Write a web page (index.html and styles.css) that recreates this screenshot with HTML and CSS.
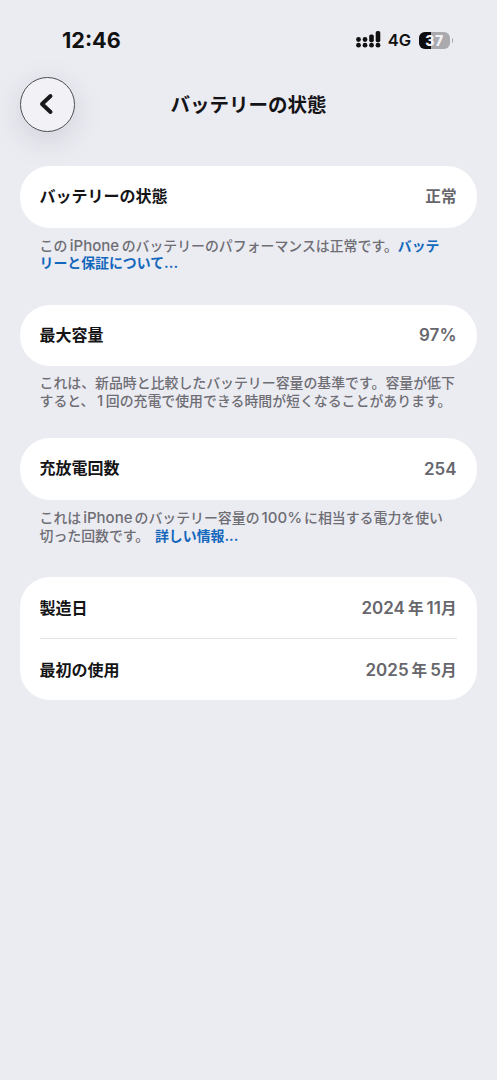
FILE: index.html
```html
<!DOCTYPE html>
<html lang="ja">
<head>
<meta charset="utf-8">
<title>バッテリーの状態</title>
<link rel="stylesheet" href="styles.css">
</head>
<body>
<div class="status">
  <span class="time">12:46</span>
  <div class="status-right">
    <svg class="signal" width="25" height="17" viewBox="0 0 25 17">
      <g fill="#111">
        <circle cx="2.5" cy="8.5" r="2.4"/><circle cx="2.5" cy="14.2" r="2.4"/>
        <circle cx="9" cy="8.5" r="2.4"/><circle cx="9" cy="14.2" r="2.4"/>
        <rect x="13.2" y="3.5" width="4.6" height="7.7" rx="1.8"/><circle cx="15.5" cy="14.2" r="2.4"/>
        <rect x="19.7" y="0" width="4.6" height="11.2" rx="1.8"/><circle cx="22" cy="14.2" r="2.4"/>
      </g>
    </svg>
    <span class="net">4G</span>
    <div class="battery"><span class="level"></span><span class="pct">37</span></div>
    <span class="nub"></span>
  </div>
</div>
<header class="nav">
  <button class="back" aria-label="戻る">
    <svg width="16" height="22" viewBox="0 0 16 22"><path d="M12.5 3 L4 11 L12.5 19" fill="none" stroke="#1a1a1c" stroke-width="4" stroke-linecap="round" stroke-linejoin="round"/></svg>
  </button>
  <h1>バッテリーの状態</h1>
</header>
<main>
  <section class="card"><div class="row"><span class="label">バッテリーの状態</span><span class="value">正常</span></div></section>
  <p class="note note-a">この<span class="lat">iPhone</span>のバッテリーのパフォーマンスは正常です。<a>バッテ<br>リーと保証について...</a></p>

  <section class="card"><div class="row"><span class="label">最大容量</span><span class="value value-solo"><span class="num">97%</span></span></div></section>
  <p class="note note-b">これは、新品時と比較したバッテリー容量の基準です。容量が低下<br>すると、<span class="lat">1</span>回の充電で使用できる時間が短くなることがあります。</p>

  <section class="card"><div class="row"><span class="label">充放電回数</span><span class="value value-solo"><span class="num">254</span></span></div></section>
  <p class="note note-c">これは<span class="lat">iPhone</span>のバッテリー容量の<span class="lat">100%</span>に相当する電力を使い<br>切った回数です。 <a>詳しい情報...</a></p>

  <section class="card">
    <div class="row row-tight"><span class="label">製造日</span><span class="value"><span class="num">2024</span><span class="cjk">年</span><span class="num">11</span>月</span></div>
    <div class="divider"></div>
    <div class="row row-tight"><span class="label">最初の使用</span><span class="value"><span class="num">2025</span><span class="cjk">年</span><span class="num">5</span>月</span></div>
  </section>
</main>
</body>
</html>
```
FILE: styles.css
```css
* { box-sizing: border-box; }
html, body { margin: 0; padding: 0; }
body {
  width: 497px;
  height: 1080px;
  overflow: hidden;
  background: #ebebf2;
  font-family: "Inter", "Noto Sans CJK JP", sans-serif;
  color: #111;
}
.status {
  height: 77px;
  padding: 27px 0 0 62px;
  display: flex;
  justify-content: space-between;
  align-items: flex-start;
}
.time { font-size: 21.6px; font-weight: 700; line-height: 26px; }
.status-right {
  display: flex;
  align-items: center;
  height: 26px;
  padding-right: 44px;
}
.signal { margin-right: 7px; margin-top: -2px; }
.net { font-size: 16.5px; font-weight: 600; margin-right: 8px; }
.battery {
  position: relative;
  width: 31px;
  height: 17px;
  border-radius: 6px;
  background: #a9a9ae;
  overflow: hidden;
  display: flex;
  align-items: center;
  justify-content: center;
}
.level { position: absolute; left: 0; top: 0; bottom: 0; width: 12px; background: #0d0d0f; }
.pct { position: relative; font-size: 14px; font-weight: 800; color: #f2f2f6; letter-spacing: 0.5px; }
.nub { width: 1.5px; height: 5px; margin-left: 1.5px; background: #a9a9ae; border-radius: 0 2px 2px 0; }
.nav {
  position: relative;
  height: 55px;
  display: flex;
  align-items: center;
  justify-content: center;
}
.back {
  position: absolute;
  left: 20px;
  top: 0;
  width: 55px;
  height: 55px;
  border-radius: 50%;
  border: 1px solid #4e4e54;
  background: #f2f2f6;
  padding: 0;
  display: flex;
  align-items: center;
  justify-content: center;
  box-shadow: 0 8px 28px rgba(120, 120, 135, 0.22);
}
.back svg { margin-left: -4px; margin-top: -1px; }
h1 { margin: 0; padding-top: 2px; font-size: 19.5px; font-weight: 700; line-height: 55px; color: #141416; }
main { padding: 34px 20px 0; }
.card { background: #fff; border-radius: 30px; }
.row {
  height: 61.5px;
  padding: 0 20.5px 3px 19.5px;
  display: flex;
  align-items: center;
  justify-content: space-between;
}
.row-tight { height: 61px; padding-bottom: 2px; }
.label { font-size: 16px; font-weight: 700; color: #141416; }
.value { font-size: 15.6px; font-weight: 600; color: #66666c; }
.value-solo { margin-top: 3px; }
.num { font-size: 17px; font-weight: 600; }
.cjk { margin: 0 3px; }
.divider { height: 1px; margin: 0 20px; background: #e4e4e8; }
.note {
  padding: 0 19.5px;
  font-size: 13.9px;
  line-height: 17.5px;
  font-weight: 500;
  color: #6e6e74;
  white-space: nowrap;
}
.lat { font-size: 15px; margin: 0 2.5px; line-height: 0; }
.note a { color: #1468bc; font-weight: 700; }
.note-a { margin: 10px 0 32px; }
.note-b { margin: 9px 0 28px; }
.note-c { margin: 10.5px 0 32px; }
.note-c .lat { margin: 0 2px; }
.note-c a { margin-left: 2px; }
```
